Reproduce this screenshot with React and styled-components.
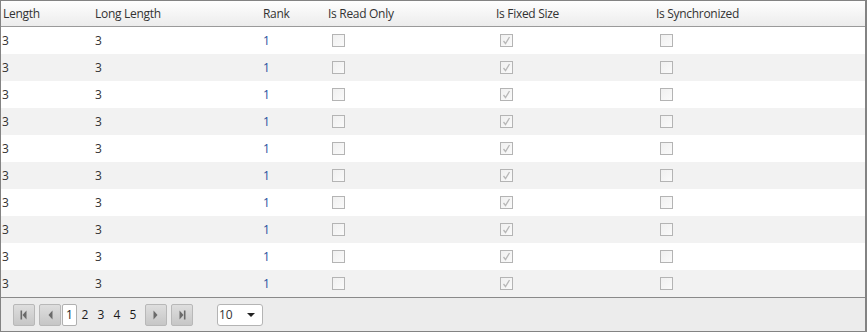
import React from "react";
import styled, { createGlobalStyle } from "styled-components";

const GlobalStyle = createGlobalStyle`
  html, body {
    margin: 0;
    padding: 0;
    background: #ffffff;
  }
  body {
    font-family: "Open Sans", "Liberation Sans", sans-serif;
    font-size: 12px;
  }
`;

const cols = "90px 168px 65px 168px 160px 1fr";

const Grid = styled.div`
  width: 867px;
  height: 332px;
  box-sizing: border-box;
  border: 1px solid #838383;
  border-right-width: 2px;
  display: flex;
  flex-direction: column;
  overflow: hidden;
`;

const HeaderRow = styled.div`
  display: grid;
  grid-template-columns: ${cols};
  height: 26px;
  flex-shrink: 0;
  background: linear-gradient(#ffffff, #ececec);
  border-bottom: 1px solid #9a9a9a;
  margin-top: -1px;
`;

const HeaderCell = styled.div`
  display: flex;
  align-items: center;
  padding-left: ${(p) => (p.$first ? "2px" : "4px")};
  color: #333333;
  letter-spacing: -0.3px;
  white-space: nowrap;
`;

const Body = styled.div`
  display: flex;
  flex-direction: column;
`;

const Row = styled.div`
  display: grid;
  grid-template-columns: ${cols};
  height: 27px;
  background: ${(p) => (p.$alt ? "#f2f2f2" : "#ffffff")};
`;

const Cell = styled.div`
  display: flex;
  align-items: center;
  padding-left: ${(p) => (p.$first ? "1px" : "4px")};
  color: ${(p) => (p.$blue ? "#1f4f9e" : "#333333")};
`;

const Check = styled.span`
  width: 11px;
  height: 11px;
  margin-left: 4px;
  border: 1px solid #b4b4b4;
  background: linear-gradient(135deg, #f0f0f0, #fafafa);
  display: flex;
  align-items: center;
  justify-content: center;
`;

const Pager = styled.div`
  flex: 1;
  display: flex;
  align-items: center;
  background: #ececec;
  border-top: 1px solid #8a8a8a;
  padding-left: 12px;
`;

const NavButton = styled.div`
  width: 20px;
  height: 20px;
  border: 1px solid #b8b8b8;
  border-radius: 2px;
  background: linear-gradient(#dedede, #c6c6c6);
  display: flex;
  align-items: center;
  justify-content: center;
  margin-right: ${(p) => p.$gap || 0}px;
`;

const Pages = styled.div`
  display: flex;
  align-items: center;
  margin-right: 4px;
`;

const PageNum = styled.div`
  width: ${(p) => (p.$current ? "13px" : "16px")};
  height: 20px;
  display: flex;
  align-items: center;
  justify-content: center;
  color: #1b1b1b;
  font-size: 12px;
  background: ${(p) => (p.$current ? "#ffffff" : "transparent")};
  border: ${(p) => (p.$current ? "1px solid #b0b0b0" : "none")};
  border-radius: 2px;
`;

const Select = styled.div`
  margin-left: 24px;
  width: 46px;
  height: 22px;
  box-sizing: border-box;
  border: 1px solid #b4b4b4;
  border-radius: 3px;
  background: #ffffff;
  display: flex;
  align-items: center;
  justify-content: space-between;
  padding: 0 7px 0 1px;
  color: #333333;
`;

const Caret = styled.span`
  width: 0;
  height: 0;
  border-left: 4px solid transparent;
  border-right: 4px solid transparent;
  border-top: 4px solid #222222;
`;

const headers = [
  "Length",
  "Long Length",
  "Rank",
  "Is Read Only",
  "Is Fixed Size",
  "Is Synchronized",
];

const NavIcon = ({ dir, bar }) => (
  <svg width="12" height="12" viewBox="0 0 12 12">
    {dir === "left" ? (
      <>
        {bar && <rect x="2.5" y="1.5" width="1.6" height="9" fill="#6a6a6a" />}
        <polygon points="8.5,1.5 4.5,6 8.5,10.5" fill="#6a6a6a" />
      </>
    ) : (
      <>
        <polygon points="3.5,1.5 7.5,6 3.5,10.5" fill="#6a6a6a" />
        {bar && <rect x="7.9" y="1.5" width="1.6" height="9" fill="#6a6a6a" />}
      </>
    )}
  </svg>
);

const CheckMark = () => (
  <svg width="9" height="9" viewBox="0 0 9 9">
    <polyline
      points="1.5,5 3.5,7.5 7.5,1"
      fill="none"
      stroke="#b8b8b8"
      strokeWidth="1.3"
    />
  </svg>
);

const rows = Array.from({ length: 10 }, (_, i) => i);

const App = () => {
  return (
    <>
      <GlobalStyle />
      <Grid>
        <HeaderRow>
          {headers.map((h, i) => (
            <HeaderCell key={h} $first={i === 0}>
              {h}
            </HeaderCell>
          ))}
        </HeaderRow>
        <Body>
          {rows.map((i) => (
            <Row key={i} $alt={i % 2 === 1}>
              <Cell $first>3</Cell>
              <Cell>3</Cell>
              <Cell $blue>1</Cell>
              <Cell>
                <Check />
              </Cell>
              <Cell>
                <Check>
                  <CheckMark />
                </Check>
              </Cell>
              <Cell>
                <Check />
              </Cell>
            </Row>
          ))}
        </Body>
        <Pager>
          <NavButton $gap={4}>
            <NavIcon dir="left" bar />
          </NavButton>
          <NavButton $gap={1}>
            <NavIcon dir="left" />
          </NavButton>
          <Pages>
            <PageNum $current>1</PageNum>
            <PageNum>2</PageNum>
            <PageNum>3</PageNum>
            <PageNum>4</PageNum>
            <PageNum>5</PageNum>
          </Pages>
          <NavButton $gap={4}>
            <NavIcon dir="right" />
          </NavButton>
          <NavButton>
            <NavIcon dir="right" bar />
          </NavButton>
          <Select>
            <span>10</span>
            <Caret />
          </Select>
        </Pager>
      </Grid>
    </>
  );
};

export default App;
